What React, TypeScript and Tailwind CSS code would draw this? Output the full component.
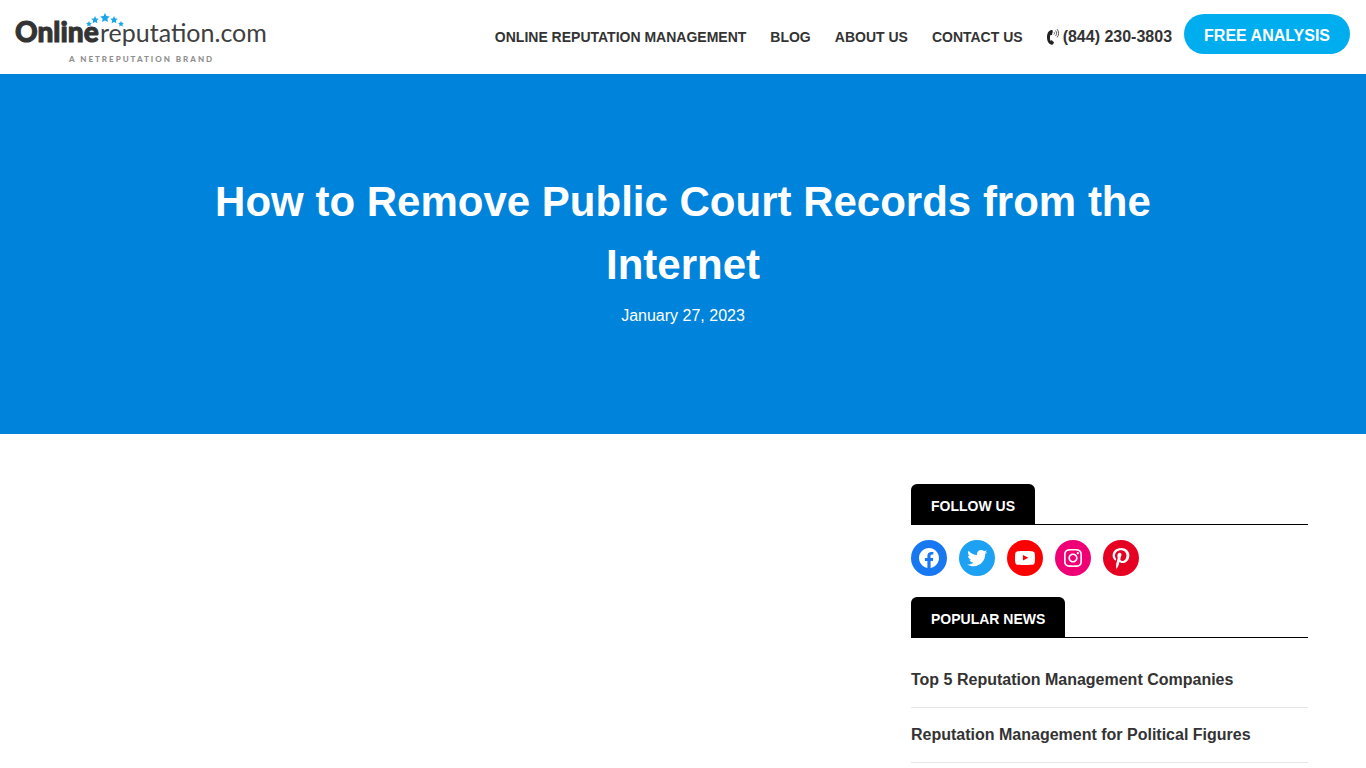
import React from 'react';

interface NavItem {
  label: string;
  href: string;
}

interface SocialItem {
  name: string;
  href: string;
  color: string;
  path: string;
}

const NAV_ITEMS: NavItem[] = [
  { label: 'ONLINE REPUTATION MANAGEMENT', href: '#management' },
  { label: 'BLOG', href: '#blog' },
  { label: 'ABOUT US', href: '#about' },
  { label: 'CONTACT US', href: '#contact' },
];

const POPULAR_NEWS: NavItem[] = [
  { label: 'Top 5 Reputation Management Companies', href: '#top-5' },
  { label: 'Reputation Management for Political Figures', href: '#political-figures' },
];

const SOCIAL_ITEMS: SocialItem[] = [
  {
    name: 'Facebook',
    href: '#facebook',
    color: 'bg-[#1778f2]',
    path: 'M12 2C6.5 2 2 6.5 2 12c0 5 3.7 9.1 8.4 9.9v-7H7.9V12h2.5V9.8c0-2.5 1.5-3.9 3.8-3.9 1.1 0 2.2.2 2.2.2v2.5h-1.3c-1.2 0-1.6.8-1.6 1.6V12h2.8l-.4 2.9h-2.3v7C18.3 21.1 22 17 22 12c0-5.5-4.5-10-10-10z',
  },
  {
    name: 'Twitter',
    href: '#twitter',
    color: 'bg-[#1da1f2]',
    path: 'M22.23,5.924c-0.736,0.326-1.527,0.547-2.357,0.646c0.847-0.508,1.498-1.312,1.804-2.27c-0.793,0.47-1.671,0.812-2.606,0.996C18.324,4.498,17.257,4,16.077,4c-2.266,0-4.103,1.837-4.103,4.103c0,0.322,0.036,0.635,0.106,0.935C8.67,8.867,5.647,7.234,3.623,4.751C3.27,5.357,3.067,6.062,3.067,6.814c0,1.424,0.724,2.679,1.825,3.415c-0.673-0.021-1.305-0.206-1.859-0.513c0,0.017,0,0.034,0,0.052c0,1.988,1.414,3.647,3.292,4.023c-0.344,0.094-0.707,0.144-1.081,0.144c-0.264,0-0.521-0.026-0.772-0.074c0.522,1.63,2.038,2.816,3.833,2.85c-1.404,1.1-3.174,1.756-5.096,1.756c-0.331,0-0.658-0.019-0.979-0.057c1.816,1.164,3.973,1.843,6.29,1.843c7.547,0,11.675-6.252,11.675-11.675c0-0.178-0.004-0.355-0.012-0.531C20.985,7.47,21.68,6.747,22.23,5.924z',
  },
  {
    name: 'YouTube',
    href: '#youtube',
    color: 'bg-[#ff0000]',
    path: 'M21.8,8.001c0,0-0.195-1.378-0.795-1.985c-0.76-0.797-1.613-0.801-2.004-0.847c-2.799-0.202-6.997-0.202-6.997-0.202h-0.009c0,0-4.198,0-6.997,0.202C4.608,5.216,3.756,5.22,2.995,6.016C2.395,6.623,2.2,8.001,2.2,8.001S2,9.62,2,11.238v1.517c0,1.618,0.2,3.237,0.2,3.237s0.195,1.378,0.795,1.985c0.761,0.797,1.76,0.771,2.205,0.855c1.6,0.153,6.8,0.201,6.8,0.201s4.203-0.006,7.001-0.209c0.391-0.047,1.243-0.051,2.004-0.847c0.6-0.607,0.795-1.985,0.795-1.985s0.2-1.618,0.2-3.237v-1.517C22,9.62,21.8,8.001,21.8,8.001z M9.935,14.594l-0.001-5.62l5.404,2.82L9.935,14.594z',
  },
  {
    name: 'Instagram',
    href: '#instagram',
    color: 'bg-[#f00075]',
    path: 'M12,4.622c2.403,0,2.688,0.009,3.637,0.052c0.877,0.04,1.354,0.187,1.671,0.31c0.42,0.163,0.72,0.358,1.035,0.673c0.315,0.315,0.51,0.615,0.673,1.035c0.123,0.317,0.27,0.794,0.31,1.671c0.043,0.949,0.052,1.234,0.052,3.637s-0.009,2.688-0.052,3.637c-0.04,0.877-0.187,1.354-0.31,1.671c-0.163,0.42-0.358,0.72-0.673,1.035c-0.315,0.315-0.615,0.51-1.035,0.673c-0.317,0.123-0.794,0.27-1.671,0.31c-0.949,0.043-1.233,0.052-3.637,0.052s-2.688-0.009-3.637-0.052c-0.877-0.04-1.354-0.187-1.671-0.31c-0.42-0.163-0.72-0.358-1.035-0.673c-0.315-0.315-0.51-0.615-0.673-1.035c-0.123-0.317-0.27-0.794-0.31-1.671C4.631,14.688,4.622,14.403,4.622,12s0.009-2.688,0.052-3.637c0.04-0.877,0.187-1.354,0.31-1.671c0.163-0.42,0.358-0.72,0.673-1.035c0.315-0.315,0.615-0.51,1.035-0.673c0.317-0.123,0.794-0.27,1.671-0.31C9.312,4.631,9.597,4.622,12,4.622 M12,3C9.556,3,9.249,3.01,8.289,3.054C7.331,3.098,6.677,3.25,6.105,3.472C5.513,3.702,5.011,4.01,4.511,4.511c-0.5,0.5-0.808,1.002-1.038,1.594C3.25,6.677,3.098,7.331,3.054,8.289C3.01,9.249,3,9.556,3,12c0,2.444,0.01,2.751,0.054,3.711c0.044,0.958,0.196,1.612,0.418,2.185c0.23,0.592,0.538,1.094,1.038,1.594c0.5,0.5,1.002,0.808,1.594,1.038c0.572,0.222,1.227,0.375,2.185,0.418C9.249,20.99,9.556,21,12,21s2.751-0.01,3.711-0.054c0.958-0.044,1.612-0.196,2.185-0.418c0.592-0.23,1.094-0.538,1.594-1.038c0.5-0.5,0.808-1.002,1.038-1.594c0.222-0.572,0.375-1.227,0.418-2.185C20.99,14.751,21,14.444,21,12s-0.01-2.751-0.054-3.711c-0.044-0.958-0.196-1.612-0.418-2.185c-0.23-0.592-0.538-1.094-1.038-1.594c-0.5-0.5-1.002-0.808-1.594-1.038c-0.572-0.222-1.227-0.375-2.185-0.418C14.751,3.01,14.444,3,12,3L12,3z M12,7.378c-2.552,0-4.622,2.069-4.622,4.622S9.448,16.622,12,16.622s4.622-2.069,4.622-4.622S14.552,7.378,12,7.378z M12,15c-1.657,0-3-1.343-3-3s1.343-3,3-3s3,1.343,3,3S13.657,15,12,15z M16.804,6.116c-0.596,0-1.08,0.484-1.08,1.08s0.484,1.08,1.08,1.08c0.596,0,1.08-0.484,1.08-1.08S17.401,6.116,16.804,6.116z',
  },
  {
    name: 'Pinterest',
    href: '#pinterest',
    color: 'bg-[#e60122]',
    path: 'M12.289,2C6.617,2,3.606,5.648,3.606,9.622c0,1.846,1.025,4.146,2.666,4.878c0.25,0.111,0.381,0.063,0.439-0.169c0.044-0.175,0.267-1.029,0.365-1.428c0.032-0.128,0.017-0.237-0.091-0.362C6.445,11.911,6.01,10.75,6.01,9.668c0-2.777,2.194-5.464,5.933-5.464c3.23,0,5.49,2.108,5.49,5.122c0,3.407-1.794,5.768-4.13,5.768c-1.291,0-2.257-1.021-1.948-2.277c0.372-1.495,1.089-3.112,1.089-4.191c0-0.967-0.542-1.775-1.663-1.775c-1.319,0-2.379,1.309-2.379,3.059c0,1.115,0.394,1.869,0.394,1.869s-1.302,5.279-1.54,6.261c-0.405,1.666,0.053,4.368,0.094,4.604c0.021,0.126,0.167,0.169,0.25,0.063c0.129-0.165,1.699-2.419,2.142-4.051c0.158-0.59,0.817-2.995,0.817-2.995c0.43,0.784,1.681,1.446,3.013,1.446c3.963,0,6.822-3.494,6.822-7.833C20.394,5.112,16.849,2,12.289,2',
  },
];

// Arc of stars above the wordmark: center x, center y, radius
const STARS = [
  [73, 10, 3],
  [79, 6, 4],
  [89, 4, 5],
  [98, 6, 4],
  [105, 10, 3],
];

const starPoints = (cx: number, cy: number, r: number) =>
  Array.from({ length: 10 }, (_, i) => {
    const radius = i % 2 === 0 ? r : r * 0.5;
    const angle = (Math.PI / 5) * i - Math.PI / 2;
    return `${(cx + radius * Math.cos(angle)).toFixed(2)},${(cy + radius * Math.sin(angle)).toFixed(2)}`;
  }).join(' ');

const Logo: React.FC = () => (
  <a href="#home" aria-label="Onlinereputation.com home" className="shrink-0">
    <svg
      width="252"
      height="50"
      viewBox="0 0 252 50"
      className="block overflow-visible font-['Lato',sans-serif]"
    >
      {STARS.map(([cx, cy, r]) => (
        <polygon key={cx} points={starPoints(cx, cy, r)} fill="#1aa7e5" />
      ))}
      <text x="-1" y="28" fontSize="28" fontWeight="900" fill="#333333" stroke="#333333" strokeWidth="1">
        Online
      </text>
      <text x="84" y="28" fontSize="25" fill="#404040">reputation.com</text>
      <text x="53" y="48" fontSize="8" fontWeight="900" fill="#8f8f8f" className="tracking-[2px]">
        A NETREPUTATION BRAND
      </text>
    </svg>
  </a>
);

const PhoneIcon: React.FC = () => (
  <svg width="12" height="16" viewBox="0 0 12 16" aria-hidden="true">
    <path
      d="M4.2 1C1.200 1.800 0 4.800 0 8.200s1.400 6.600 4.600 7.500c.5.1.9 0 1.200-.3l1-1.300c.3-.4.2-.9-.1-1.200l-1.700-1.400c-.4-.3-.8-.2-1.100.1l-.4.3C2.800 10.200 2.800 7.400 3.400 5.900l.7.2c.5.1.9-.1 1-.6l.7-3.200c.1-.9-.6-1.500-1.600-1.300Z"
      fill="#222222"
    />
    <path
      d="M7.200 3.400c.5.5.5 1.300 0 1.800M8.800 1.900c1.100 1.300 1.100 3.500 0 4.800M10.400.5c1.700 2.200 1.700 5.400 0 7.600"
      fill="none"
      stroke="#444444"
      strokeWidth=".9"
      strokeLinecap="round"
    />
  </svg>
);

const Header: React.FC = () => (
  <header className="flex items-start justify-between gap-6 bg-white px-4 pt-3.5 pb-2.5">
    <Logo />
    <div className="flex items-start gap-3">
      <nav aria-label="Main" className="flex gap-6 py-[11px]">
        {NAV_ITEMS.map((item) => (
          <a key={item.label} href={item.href} className="text-sm leading-6 font-bold whitespace-nowrap">
            {item.label}
          </a>
        ))}
        <a href="tel:8442303803" className="flex items-center gap-1 leading-6 font-bold whitespace-nowrap">
          <PhoneIcon />
          (844) 230-3803
        </a>
      </nav>
      <a
        href="#analysis"
        className="rounded-full bg-[#00aeef] px-5 pt-2.5 pb-1.5 leading-6 font-bold whitespace-nowrap text-white"
      >
        FREE ANALYSIS
      </a>
    </div>
  </header>
);

const WidgetTitle: React.FC<{ children: React.ReactNode }> = ({ children }) => (
  <div className="flex border-b border-black">
    <h2 className="rounded-t-md bg-black px-5 pt-3 pb-2 text-sm leading-5 font-bold text-white">{children}</h2>
  </div>
);

const Sidebar: React.FC = () => (
  <aside className="w-[397px]">
    <section>
      <WidgetTitle>FOLLOW US</WidgetTitle>
      <ul className="mt-[15px] flex gap-3">
        {SOCIAL_ITEMS.map((item) => (
          <li key={item.name}>
            <a
              href={item.href}
              aria-label={item.name}
              className={`flex size-9 items-center justify-center rounded-full text-white ${item.color}`}
            >
              <svg width="24" height="24" viewBox="0 0 24 24" fill="currentColor" aria-hidden="true">
                <path d={item.path} />
              </svg>
            </a>
          </li>
        ))}
      </ul>
    </section>
    <section className="mt-[21px]">
      <WidgetTitle>POPULAR NEWS</WidgetTitle>
      <ul className="mt-[15px]">
        {POPULAR_NEWS.map((item) => (
          <li key={item.label} className="border-b border-[#e5e5e5] py-[15px]">
            <a href={item.href} className="block leading-6 font-bold">
              {item.label}
            </a>
          </li>
        ))}
      </ul>
    </section>
  </aside>
);

const App: React.FC = () => {
  return (
    <div className="bg-white font-['Liberation_Sans',Arial,sans-serif] text-base text-[#333333]">
      <Header />
      <main>
        <div className="bg-[#0083db] px-5 pt-24 pb-[106px] text-center text-white">
          <h1 className="mx-auto max-w-[1000px] text-[42px] leading-[63px] font-bold">
            How to Remove Public Court Records from the Internet
          </h1>
          <p className="mt-2 leading-6">January 27, 2023</p>
        </div>
        <div className="mx-auto flex max-w-[1250px] justify-end pt-[50px]">
          <Sidebar />
        </div>
      </main>
    </div>
  );
};

export default App;
